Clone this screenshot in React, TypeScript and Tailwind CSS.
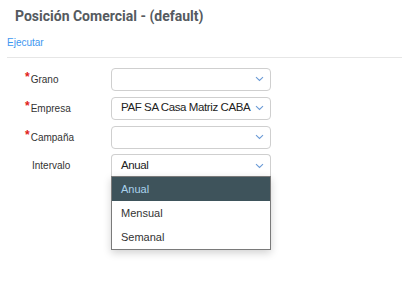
import React from "react";

const Chevron = () => (
  <svg width="9" height="6" viewBox="0 0 9 6" className="shrink-0">
    <path d="M1 1.2 L4.5 4.5 L8 1.2" fill="none" stroke="#6b9bd6" strokeWidth="1.1" />
  </svg>
);

const Field = ({ label, required, value, open }: { label: string; required?: boolean; value?: string; open?: boolean }) => (
  <div className="flex items-center h-[22px]">
    <div className="w-[111px] flex items-center pl-[25px] text-[10px] text-[#333]">
      {required ? <span className="text-[#e0201b] text-[12px] leading-none -mt-[5px] mr-[1px] font-bold">*</span> : <span className="w-[7px]" />}
      <span>{label}</span>
    </div>
    <div
      className={
        "w-[160px] h-[23px] border border-[#cfcfcf] bg-white flex items-center justify-between pl-[9px] pr-[6px] text-[11.5px] tracking-[-0.4px] text-[#222] whitespace-nowrap " +
        (open ? "rounded-t-[4px] border-b-0" : "rounded-[4px]")
      }
    >
      <span>{value ?? ""}</span>
      <Chevron />
    </div>
  </div>
);

export default function App() {
  return (
    <div className="w-[409px] h-[295px] bg-white relative" style={{ fontFamily: "'Liberation Sans', Arial, sans-serif" }}>
      <div className="pl-[15px] pt-[6px] text-[14px] font-bold text-[#555a60]" style={{ fontFamily: "Roboto, 'Liberation Sans', sans-serif" }}>
        Posición Comercial - (default)
      </div>
      <div className="pl-[7px] mt-[8px] text-[10px] text-[#3d97f0]">Ejecutar</div>
      <div className="mx-[7px] mt-[7px] border-t border-[#e6e6e6]" />
      <div className="mt-[10px] flex flex-col gap-[7px]">
        <Field label="Grano" required />
        <Field label="Empresa" required value="PAF SA Casa Matriz CABA" />
        <Field label="Campaña" required />
        <div className="relative -mt-[1px]">
          <Field label="Intervalo" value="Anual" open />
          <div className="absolute left-[111px] top-[22px] w-[160px] border border-[#7a7a7a] bg-white shadow-[0_3px_8px_rgba(0,0,0,0.18)] text-[11px]">
            <div className="h-[24px] bg-[#3e535b] text-[#a9d2ec] flex items-center pl-[9px]">Anual</div>
            <div className="h-[24px] text-[#333] flex items-center pl-[9px]">Mensual</div>
            <div className="h-[24px] text-[#333] flex items-center pl-[9px]">Semanal</div>
          </div>
        </div>
      </div>
    </div>
  );
}
